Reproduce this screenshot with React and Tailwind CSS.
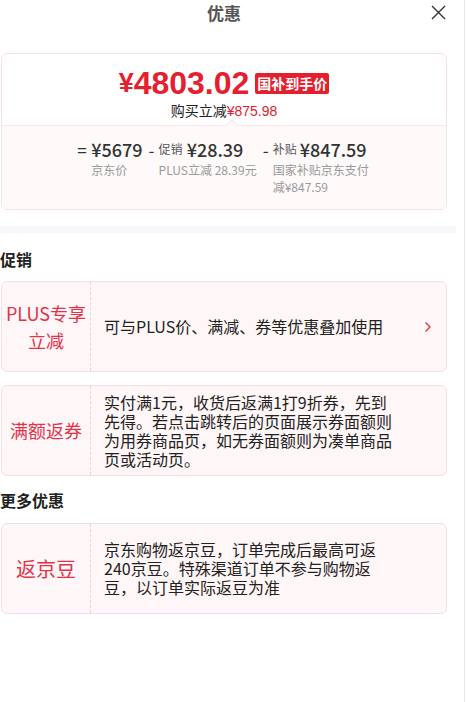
import React from "react";

const cjk = { fontFamily: '"Noto Sans CJK SC", "Noto Sans", sans-serif' };
const latin = { fontFamily: '"Liberation Sans", "Noto Sans CJK SC", sans-serif' };

function Chevron() {
  return (
    <svg width="8" height="12" viewBox="0 0 8 12" fill="none">
      <path d="M1.5 1.5 L6 6 L1.5 10.5" stroke="#e0303e" strokeWidth="1.3" />
    </svg>
  );
}

function PromoCard({ label, labelSize, arrow, children }) {
  return (
    <div className="ml-[1px] w-[446px] h-[91px] flex border border-[#f5dfe2] bg-[#fff6f7] rounded-[6px]">
      <div
        className={`w-[89px] shrink-0 flex items-center justify-center text-center text-[#e2334a] border-r border-dashed border-[#efd0d5] ${labelSize}`}
      >
        {label}
      </div>
      <div className="flex-1 flex items-center pl-[13px] pr-[14px]">
        <div className="w-[294px] text-[16px] leading-[19px] text-[#222]">
          {children}
        </div>
        {arrow && (
          <div className="ml-auto">
            <Chevron />
          </div>
        )}
      </div>
    </div>
  );
}

export default function App() {
  return (
    <div className="w-[466px] h-[702px] bg-white flex" style={cjk}>
      <div className="w-[465px] h-full border-r border-[#e8e8e8]">
        {/* header */}
        <div className="w-[448px] h-[25px] relative flex items-center justify-center">
          <span className="text-[17px] font-bold text-[#555]">优惠</span>
          <svg
            className="absolute right-[2px] top-[5px]"
            width="15"
            height="15"
            viewBox="0 0 15 15"
          >
            <path d="M1 1 L14 14 M14 1 L1 14" stroke="#333" strokeWidth="1.4" />
          </svg>
        </div>

        {/* price card */}
        <div className="mt-[28px] ml-[1px] w-[446px] border border-[#f3e3e5] rounded-[6px] overflow-hidden">
          <div className="h-[71px] pt-[12px] flex flex-col items-center">
            <div className="h-[34px] flex items-center text-[#e4202e] font-bold leading-none">
              <span className="text-[27px]" style={latin}>¥</span>
              <span className="text-[32px]" style={latin}>4803.02</span>
              <span className="ml-[6px] h-[21px] flex items-center bg-[#e4202e] text-white text-[14px] font-bold px-[2px] rounded-[2px]">
                国补到手价
              </span>
            </div>
            <div
              className="h-[20px] mt-[1px] flex items-center text-[14px] leading-none text-[#222]"
              style={latin}
            >
              购买立减<span className="text-[#e4202e]">¥875.98</span>
            </div>
          </div>
          <div className="relative border-t border-[#f6e8ea] bg-[#fefafa] pt-[11px] pb-[14px]">
            <div className="absolute left-[226px] -top-[5px] w-[8px] h-[8px] rotate-45 bg-[#fefafa] border-t border-l border-[#f6e8ea]" />
            <div className="flex justify-center gap-[6px] text-[#333]">
              <div className="flex">
                <span className="w-[14px] h-[24px] flex items-center text-[17px] leading-none">=</span>
                <div>
                  <div className="h-[24px] flex items-center text-[18px] leading-none font-medium">¥5679</div>
                  <div className="text-[12px] leading-[17px] text-[#999]">京东价</div>
                </div>
              </div>
              <div className="flex">
                <span className="w-[10px] h-[24px] flex items-center text-[17px] leading-none">-</span>
                <div>
                  <div className="h-[24px] flex items-center leading-none">
                    <span className="text-[12px] text-[#555]">促销</span>
                    <span className="text-[18px] font-medium ml-[4px]">¥28.39</span>
                  </div>
                  <div className="text-[12px] leading-[17px] text-[#999]">PLUS立减 28.39元</div>
                </div>
              </div>
              <div className="flex">
                <span className="w-[10px] h-[24px] flex items-center text-[17px] leading-none">-</span>
                <div>
                  <div className="h-[24px] flex items-center leading-none">
                    <span className="text-[12px] text-[#555]">补贴</span>
                    <span className="text-[18px] font-medium ml-[3px]">¥847.59</span>
                  </div>
                  <div className="w-[98px] text-[12px] leading-[17px] text-[#999]">
                    国家补贴京东支付减¥847.59
                  </div>
                </div>
              </div>
            </div>
          </div>
        </div>

        {/* divider band */}
        <div className="mt-[16px] w-[456px] h-[7px] bg-[#f5f7fb]" />

        <div className="w-[448px]">
          <div className="mt-[15px] text-[16px] leading-[22px] font-bold text-[#222]">促销</div>
          <div className="mt-[11px]">
            <PromoCard
              arrow
              labelSize="text-[18px] leading-[27px]"
              label={
                <span>
                  PLUS专享
                  <br />
                  立减
                </span>
              }
            >
              可与PLUS价、满减、券等优惠叠加使用
            </PromoCard>
          </div>
          <div className="mt-[13px]">
            <PromoCard labelSize="text-[18px] leading-[27px]" label="满额返券">
              实付满1元，收货后返满1打9折券，先到先得。若点击跳转后的页面展示券面额则为用券商品页，如无券面额则为凑单商品页或活动页。
            </PromoCard>
          </div>

          <div className="mt-[13px] text-[16px] leading-[22px] font-bold text-[#222]">更多优惠</div>
          <div className="mt-[12px]">
            <PromoCard labelSize="text-[20px] leading-[28px]" label="返京豆">
              京东购物返京豆，订单完成后最高可返240京豆。特殊渠道订单不参与购物返豆，以订单实际返豆为准
            </PromoCard>
          </div>
        </div>
      </div>
    </div>
  );
}
